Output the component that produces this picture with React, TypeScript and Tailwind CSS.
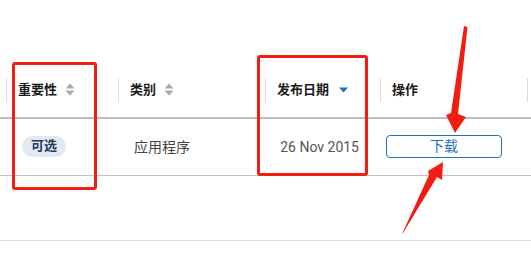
import React from "react";

function SortIcon() {
  return (
    <svg width="10" height="13" viewBox="0 0 10 13" className="ml-[8px]">
      <path d="M5 0.5 L9.5 5.5 L0.5 5.5 Z" fill="#a9a9a9" />
      <path d="M0.5 7.5 L9.5 7.5 L5 12.5 Z" fill="#a9a9a9" />
    </svg>
  );
}

function SortDesc() {
  return (
    <svg width="9" height="6" viewBox="0 0 9 6" className="ml-[10px]">
      <path d="M0 0.5 L9 0.5 L4.5 5.5 Z" fill="#1b72c2" />
    </svg>
  );
}

function HeaderCell({
  label,
  width,
  icon,
}: {
  label: string;
  width: string;
  icon?: React.ReactNode;
}) {
  return (
    <div className={`${width} flex items-center h-full`}>
      <div className="w-px h-[24px] bg-[#dcdcdc]" />
      <div className="flex items-center pl-[11px] text-[13px] font-bold text-[#1a1a1a]">
        {label}
        {icon}
      </div>
    </div>
  );
}

export default function App() {
  return (
    <div
      className="relative w-[531px] h-[263px] bg-white overflow-hidden"
      style={{ fontFamily: "Roboto, 'Noto Sans CJK SC', sans-serif" }}
    >
      <div className="pt-[62px]">
        <div className="flex h-[57px] border-b-2 border-[#bdbdbd] pl-[6px]">
          <HeaderCell label="重要性" width="w-[112px]" icon={<SortIcon />} />
          <HeaderCell label="类别" width="w-[147px]" icon={<SortIcon />} />
          <HeaderCell label="发布日期" width="w-[115px]" icon={<SortDesc />} />
          <HeaderCell label="操作" width="w-[147px]" />
          <div className="flex items-center h-full">
            <div className="w-px h-[24px] bg-[#dcdcdc]" />
          </div>
        </div>
        <div className="flex h-[57px] items-center border-b border-[#c4c4c4] pl-[6px]">
          <div className="w-[112px] pl-[16px] flex">
            <span className="h-[21px] px-[9px] rounded-full bg-[#e2e9f1] text-[13px] font-bold text-[#1d3c5e] flex items-center -mt-[2px]">
              可选
            </span>
          </div>
          <div className="w-[147px] pl-[16px] text-[14px] text-[#444]">
            应用程序
          </div>
          <div className="w-[115px] pr-[21px] text-right text-[14px] text-[#555]">
            26 Nov 2015
          </div>
          <div className="w-[147px] pl-[6px]">
            <button className="w-[116px] h-[23px] border border-[#1b72c2] rounded-[4px] text-[14px] text-[#1b6fc0] flex items-center justify-center -mt-[1px]">
              下载
            </button>
          </div>
        </div>
        <div className="h-[65px] border-b border-[#dedede]" />
      </div>

      <div className="absolute left-[12px] top-[62px] w-[85px] h-[128px] border-[3px] border-[#f21d12] rounded-[3px]" />
      <div className="absolute left-[257px] top-[55px] w-[111px] h-[121px] border-[3px] border-[#f21d12] rounded-[3px]" />

      <svg
        className="absolute left-0 top-0"
        width="531"
        height="263"
        viewBox="0 0 531 263"
      >
        <polygon
          points="464,26 467.5,27 458,114 466,117 455,133 446,115 451,113"
          fill="#f21d12"
        />
        <polygon
          points="402,234 429,175 428,171 443,162 442,180 437,177 403,233"
          fill="#f21d12"
        />
      </svg>
    </div>
  );
}
